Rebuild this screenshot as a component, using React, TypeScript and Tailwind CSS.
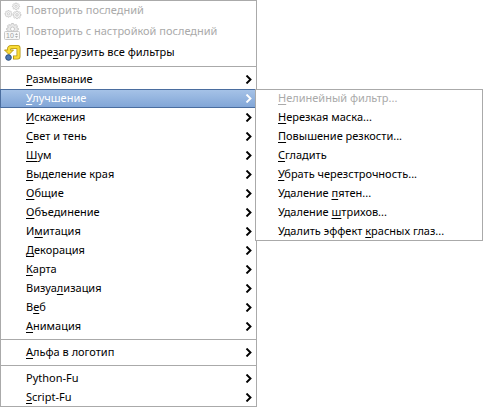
import type { ReactNode } from "react";

type Item = { label: string; key?: number; icon?: ReactNode; disabled?: boolean; arrow?: boolean; open?: boolean };

const GEAR =
  "M-1-5h2l.4 1.3 1 .4L3.600-4 5-2.600l-.7 1.200.4 1L6 0v1.200l-1.300.5-.5 1L4.900 4 3.600 5.200l-1.200-.7-1 .4L1 6h-2l-.4-1.200-1-.4-1.200.7L-5 4l.7-1.300-.5-1L-6 1.200V0l1.300-.4.4-1L-5-2.600-3.600-4l1.200.7 1-.4z";

function GearsIcon() {
  return (
    <svg className="size-[18px]" viewBox="0 0 18 18" fill="#f4f4f4" stroke="#c4c4c4" aria-hidden="true">
      <g transform="translate(12 4) scale(.6)" strokeWidth="1.300">
        <path d={GEAR} />
        <circle cy=".5" r="1.800" fill="#fff" />
      </g>
      <g transform="translate(4.500 11.500) scale(.6)" strokeWidth="1.300">
        <path d={GEAR} />
        <circle cy=".5" r="1.800" fill="#fff" />
      </g>
      <g transform="translate(13 12.500) scale(.68)" strokeWidth="1.300">
        <path d={GEAR} />
        <circle cy=".5" r="1.800" fill="#fff" />
      </g>
    </svg>
  );
}

function GearValueIcon() {
  return (
    <svg className="size-[18px]" viewBox="0 0 18 18" aria-hidden="true">
      <g transform="translate(8.500 5.500)" fill="#e8e8e8" stroke="#c8c8c8" strokeWidth="1">
        <path d={GEAR} />
        <circle cy=".5" r="2" fill="#fff" />
      </g>
      <rect x=".5" y="8.500" width="15" height="8" rx="1" fill="#f8f8f8" stroke="#c8c8c8" />
      <text x="2" y="15" fontSize="7" fill="#a0a0a0" fontFamily="'Liberation Sans', sans-serif">
        10
      </text>
      <path d="M11 12l1.500-2 1.500 2zM11 13l1.500 2 1.500-2z" fill="#b0b0b0" />
    </svg>
  );
}

function ReloadIcon() {
  return (
    <svg className="size-[18px]" viewBox="0 0 18 18" aria-hidden="true">
      <path
        d="M5 7V5.500Q5 3 7.500 3H13.500Q14.500 3 14.500 4V12.500Q14.500 13.500 13.500 13.500H9"
        fill="none"
        stroke="#b69612"
        strokeWidth="4"
      />
      <path d="M.5 6H9.500L5 10.500z" fill="#fadc37" stroke="#b69612" strokeLinejoin="round" />
      <path
        d="M5 8V5.500Q5 3 7.500 3H13.500Q14.500 3 14.500 4V12.500Q14.500 13.500 13.500 13.500H10"
        fill="none"
        stroke="#fadc37"
        strokeWidth="2.400"
      />
      <circle cx="4.500" cy="13.500" r="2.800" fill="#4c78b2" stroke="#294d7c" />
    </svg>
  );
}

const commands: Item[] = [
  { label: "Повторить последний", icon: <GearsIcon />, disabled: true },
  { label: "Повторить с настройкой последний", icon: <GearValueIcon />, disabled: true },
  { label: "Перезагрузить все фильтры", icon: <ReloadIcon />, key: 4 },
];

const categories: Item[] = [
  { label: "Размывание", key: 0, arrow: true },
  { label: "Улучшение", key: 0, arrow: true, open: true },
  { label: "Искажения", key: 0, arrow: true },
  { label: "Свет и тень", key: 0, arrow: true },
  { label: "Шум", key: 0, arrow: true },
  { label: "Выделение края", key: 0, arrow: true },
  { label: "Общие", key: 0, arrow: true },
  { label: "Объединение", key: 0, arrow: true },
  { label: "Имитация", key: 1, arrow: true },
  { label: "Декорация", key: 0, arrow: true },
  { label: "Карта", key: 0, arrow: true },
  { label: "Визуализация", key: 5, arrow: true },
  { label: "Веб", key: 1, arrow: true },
  { label: "Анимация", key: 0, arrow: true },
];

const logo: Item[] = [{ label: "Альфа в логотип", key: 0, arrow: true }];

const scripts: Item[] = [
  { label: "Python-Fu", arrow: true },
  { label: "Script-Fu", key: 0, arrow: true },
];

const enhance: Item[] = [
  { label: "Нелинейный фильтр...", key: 0, disabled: true },
  { label: "Нерезкая маска...", key: 0 },
  { label: "Повышение резкости...", key: 0 },
  { label: "Сгладить", key: 0 },
  { label: "Убрать черезстрочность...", key: 0 },
  { label: "Удаление пятен...", key: 9 },
  { label: "Удаление штрихов...", key: 9 },
  { label: "Удалить эффект красных глаз...", key: 15 },
];

function Label({ text, at }: { text: string; at?: number }) {
  if (at === undefined) return <span className="pb-0.5">{text}</span>;
  return (
    <span className="pb-0.5">
      {text.slice(0, at)}
      <span className="underline decoration-1 underline-offset-2 [text-decoration-skip-ink:none]">{text[at]}</span>
      {text.slice(at + 1)}
    </span>
  );
}

function Entry({ item, nested }: { item: Item; nested?: boolean }) {
  const height = item.icon ? "h-[21px]" : "h-[19px]";
  const gutter = nested ? "w-[23px]" : "w-[26px]";
  const colour = item.disabled ? "text-[#aaa]" : item.open ? "text-white" : "text-black";
  const fill = item.open
    ? "border-y border-[#4a6d9f] bg-linear-to-b from-[#a5c2e7] to-[#82a6d7] shadow-[inset_1px_0_#4a6d9f]"
    : "";
  return (
    <li role="none" className="relative">
      <button
        type="button"
        role="menuitem"
        disabled={item.disabled}
        aria-haspopup={item.arrow ? "menu" : undefined}
        aria-expanded={item.arrow ? !!item.open : undefined}
        className={`flex w-full items-center pr-1 text-left whitespace-nowrap ${height} ${colour} ${fill}`}
      >
        <span className={`flex shrink-0 pl-1 ${gutter}`}>{item.icon}</span>
        <Label text={item.label} at={item.key} />
        {item.arrow && (
          <svg
            className="ml-auto h-[9px] w-2"
            viewBox="0 0 8 9"
            fill="none"
            stroke="currentColor"
            strokeWidth="1.900"
            aria-hidden="true"
          >
            <path d="M1.500.5L5.500 4.500 1.500 8.500" />
          </svg>
        )}
      </button>
      {item.open && (
        <ul
          role="menu"
          aria-label={item.label}
          className="absolute top-0 left-full z-10 -ml-0.5 w-[228px] bg-white shadow-[inset_0_0_0_1px_#aaa]"
        >
          {enhance.map((e) => (
            <Entry key={e.label} item={e} nested />
          ))}
        </ul>
      )}
    </li>
  );
}

function Group({ items }: { items: Item[] }) {
  return items.map((item) => <Entry key={item.label} item={item} />);
}

function Separator() {
  return <li role="separator" className="my-[3px] h-px bg-[#aaa]" />;
}

export default function App() {
  return (
    <main className="bg-white font-['Noto_Sans','Open_Sans',sans-serif] text-[11px] leading-4">
      <ul role="menu" aria-label="Фильтры" className="w-[257px] bg-white shadow-[inset_0_0_0_1px_#aaa]">
        <Group items={commands} />
        <Separator />
        <Group items={categories} />
        <Separator />
        <Group items={logo} />
        <Separator />
        <Group items={scripts} />
      </ul>
    </main>
  );
}
